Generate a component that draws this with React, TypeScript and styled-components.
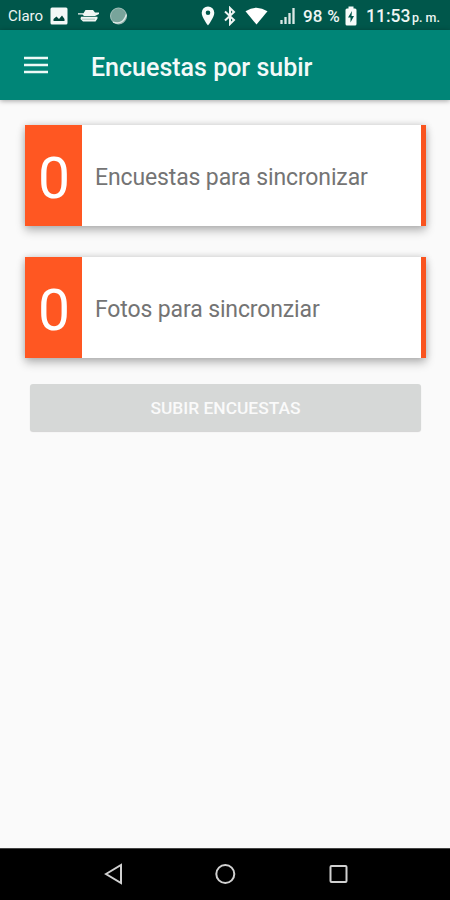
import React from "react";
import styled, { createGlobalStyle } from "styled-components";

const GlobalStyle = createGlobalStyle`
  * { box-sizing: border-box; }
  body { margin: 0; background: #fafafa; font-family: Roboto, "Liberation Sans", sans-serif; }
`;

const Screen = styled.div`
  width: 450px;
  height: 900px;
  display: flex;
  flex-direction: column;
  background: #fafafa;
  overflow: hidden;
`;

const StatusBar = styled.div`
  height: 30px;
  flex: none;
  display: flex;
  align-items: center;
  padding: 2px 0 0 8px;
  background: #00574b;
  color: #eef5f3;
  line-height: 20px;
  white-space: nowrap;
`;

const StatusText = styled.span<{ $width: number; $size: number; $gap?: number; $weight?: number; $spacing?: number; $drop?: number }>`
  width: ${(p) => p.$width}px;
  flex: none;
  margin-left: ${(p) => p.$gap ?? 0}px;
  padding-top: ${(p) => p.$drop ?? 0}px;
  font-size: ${(p) => p.$size}px;
  font-weight: ${(p) => p.$weight ?? 500};
  letter-spacing: ${(p) => p.$spacing ?? 0}px;
`;

const StatusIcon = styled.svg<{ $gap: number }>`
  display: block;
  flex: none;
  margin-left: ${(p) => p.$gap}px;
`;

const AppBar = styled.header`
  height: 70px;
  flex: none;
  display: flex;
  align-items: center;
  padding-left: 24px;
  background: #008577;
  box-shadow: 0 1px 5px rgba(0, 0, 0, 0.35);
`;

const MenuButton = styled.button`
  width: 24px;
  height: 24px;
  padding: 0;
  border: 0;
  background: none;
`;

const Title = styled.h1`
  margin: 5px 0 0 43px;
  font-size: 25px;
  line-height: 32px;
  font-weight: 500;
  color: #f3faf9;
  white-space: nowrap;
`;

const Content = styled.main`
  flex: 1;
  display: flex;
  flex-direction: column;
  padding: 25px 24px 0 25px;
`;

const Card = styled.section`
  height: 101px;
  display: flex;
  margin-bottom: 31px;
  background: #fff;
  border-right: 5px solid #f9541f;
  box-shadow: 0 5px 9px rgba(0, 0, 0, 0.24), 0 0 7px rgba(0, 0, 0, 0.16);
`;

const Count = styled.div`
  width: 57px;
  display: flex;
  align-items: center;
  justify-content: center;
  padding: 6px 0 0 1px;
  background: #ff5722;
  color: #fff;
  font-size: 57px;
  line-height: 1;
`;

const Label = styled.div`
  display: flex;
  align-items: center;
  padding: 4px 0 0 13px;
  font-size: 23px;
  letter-spacing: -0.13px;
  color: #747474;
  white-space: nowrap;
`;

const UploadButton = styled.button`
  height: 47px;
  margin: -5px 5px 0;
  padding: 0;
  border: 0;
  border-radius: 3px;
  background: #d6d8d7;
  box-shadow: 0 1px 1px rgba(0, 0, 0, 0.16);
  color: #fafafa;
  font: 500 17.4px Roboto, "Liberation Sans", sans-serif;
`;

const NavBar = styled.nav`
  height: 52px;
  flex: none;
  display: flex;
  justify-content: center;
  align-items: center;
  gap: 88.5px;
  padding-bottom: 1px;
  background: #000;
  border-top: 1px solid #444;
`;

const NavIcon = styled.svg`
  display: block;
  width: 24px;
  height: 24px;
  fill: none;
  stroke: #d0d0d0;
  stroke-width: 2;
`;

const records = ["Encuestas para sincronizar", "Fotos para sincronziar"];

export default function App() {
  return (
    <Screen>
      <GlobalStyle />
      <StatusBar>
        <StatusText $width={36} $size={15} $weight={400}>Claro</StatusText>
        <StatusIcon $gap={6} width="18" height="18" viewBox="0 0 18 18">
          <rect x=".5" y=".5" width="17" height="17" rx="1.5" fill="#f4f8f7" />
          <path d="M3.5 14V12L6.5 9.5 9 12 12 8.5 14.5 12V14Z" fill="#00463c" />
        </StatusIcon>
        <StatusIcon $gap={10} width="22" height="16" viewBox="0 0 22 16">
          <path d="M7.5 2H15L17 4.5H21V6L17 8H6L4.5 6.5H0V5.3H5.5ZM3 8.8H19.5V10.5L17.5 13.5H5L2.5 11Z" fill="#f0f6f4" />
          <path d="M4 11.2H17" stroke="#79a39b" strokeWidth=".6" />
        </StatusIcon>
        <StatusIcon $gap={9} width="19" height="19" viewBox="0 0 19 19">
          <circle cx="9.5" cy="9" r="8" fill="#78a49b" stroke="#a5c2bc" strokeWidth="1" />
          <path d="M4 15.2Q14 18.5 17.4 7.5" fill="none" stroke="#dce9e6" strokeWidth="1.4" />
        </StatusIcon>
        <StatusIcon $gap={73} width="14" height="20" viewBox="0 0 14 20">
          <path fillRule="evenodd" d="M7 .5A6.3 6.3 0 0 0 .7 6.8C.7 11.5 7 19.5 7 19.5S13.3 11.5 13.3 6.8A6.3 6.3 0 0 0 7 .5ZM7 4.5A2.3 2.3 0 1 1 7 9.1 2.3 2.3 0 0 1 7 4.5Z" fill="#f7fbfa" />
        </StatusIcon>
        <StatusIcon $gap={8} width="14" height="20" viewBox="0 0 14 20">
          <path d="M2 5.5 11 14 7 18V2L11 6 2 14.5" fill="none" stroke="#eef5f3" strokeWidth="2" />
        </StatusIcon>
        <StatusIcon $gap={8} width="23" height="18" viewBox="0 0 23 18">
          <path d="M.5 4.3Q11.5-3 22.5 4.3L11.5 17.5Z" fill="#fff" />
        </StatusIcon>
        <StatusIcon $gap={12} width="16" height="18" viewBox="0 0 16 18">
          <path d="M1.5 13V17M5.5 10V17M9.5 6V17M13.5 1V17" stroke="#dce9e6" strokeWidth="2.3" />
        </StatusIcon>
        <StatusText $width={38} $size={17} $gap={7} $spacing={0.2}>98 %</StatusText>
        <StatusIcon $gap={4} width="12" height="20" viewBox="0 0 12 20">
          <path d="M3.5.5H8.5V2.5H10Q11.5 2.5 11.5 4V18Q11.5 19.5 10 19.5H2Q.5 19.5 .5 18V4Q.5 2.5 2 2.5H3.5Z" fill="#f7fbfa" />
          <path d="M7 5 3 11.5H5.5V16.5L9 10H6.5Z" fill="#00574b" />
        </StatusIcon>
        <StatusText $width={45} $size={17.5} $gap={9}>11:53</StatusText>
        <StatusText $width={30} $size={12.5} $gap={1} $drop={4}>p. m.</StatusText>
      </StatusBar>
      <AppBar>
        <MenuButton aria-label="Menu">
          <svg width="24" height="24" viewBox="0 0 24 24">
            <path d="M0 5H24M0 12H24M0 19H24" stroke="#eefaf7" strokeWidth="2.4" />
          </svg>
        </MenuButton>
        <Title>Encuestas por subir</Title>
      </AppBar>
      <Content>
        {records.map((label) => (
          <Card key={label}>
            <Count>0</Count>
            <Label>{label}</Label>
          </Card>
        ))}
        <UploadButton disabled>SUBIR ENCUESTAS</UploadButton>
      </Content>
      <NavBar>
        <NavIcon viewBox="0 0 24 24"><path d="M5 12 20 3V21Z" /></NavIcon>
        <NavIcon viewBox="0 0 24 24"><circle cx="12.3" cy="12" r="9" /></NavIcon>
        <NavIcon viewBox="0 0 24 24"><rect x="4.5" y="4" width="16" height="16" rx="1" /></NavIcon>
      </NavBar>
    </Screen>
  );
}
